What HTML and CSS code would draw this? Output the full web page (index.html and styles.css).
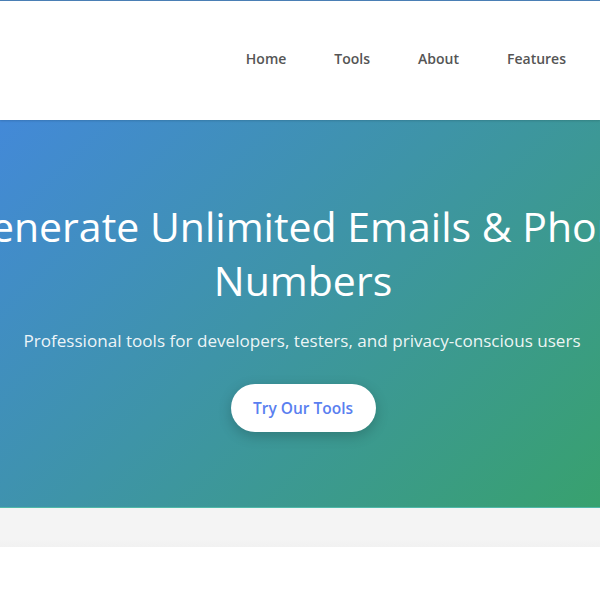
FILE: index.html
```html
<!DOCTYPE html>
<html lang="en">
<head>
<meta charset="utf-8">
<title>Generator Tools</title>
<link rel="stylesheet" href="styles.css">
</head>
<body>
<div class="page">
  <header class="site-header">
    <nav class="nav">
      <a href="#" class="nav-link">Home</a>
      <a href="#" class="nav-link">Tools</a>
      <a href="#" class="nav-link">About</a>
      <a href="#" class="nav-link">Features</a>
    </nav>
  </header>
  <section class="hero">
    <h1 class="hero-title">Generate Unlimited Emails &amp; Phone Numbers</h1>
    <p class="hero-sub">Professional tools for developers, testers, and privacy-conscious users</p>
    <a href="#" class="hero-btn">Try Our Tools</a>
  </section>
  <section class="band"></section>
</div>
</body>
</html>
```
FILE: styles.css
```css
* { box-sizing: border-box; }
html, body { margin: 0; padding: 0; }
body {
  font-family: "Open Sans", "Noto Sans", sans-serif;
  background: #fff;
  overflow-x: hidden;
}
.page {
  border-top: 1px solid #4a7fb5;
  overflow: hidden;
}
.site-header {
  height: 119px;
  display: flex;
  align-items: center;
  justify-content: flex-end;
  padding-right: 34px;
  padding-bottom: 4px;
  background: #fff;
  box-shadow: 0 1px 2px rgba(0,0,0,0.15);
  position: relative;
  z-index: 1;
}
.nav {
  display: flex;
  gap: 48px;
}
.nav-link {
  color: #555;
  text-decoration: none;
  font-size: 14px;
  font-weight: 600;
}
.hero {
  height: 388px;
  background: linear-gradient(135deg, #4389d8 0%, #38a16e 100%);
  border-bottom: 1px solid #4fb8a8;
  display: flex;
  flex-direction: column;
  align-items: center;
  padding-top: 79px;
  color: #fff;
  text-align: center;
}
.hero-title {
  margin: 0 -100px;
  width: 800px;
  font-size: 41px;
  font-weight: 500;
  line-height: 54px;
  position: relative;
  left: 3px;
}
.hero-sub {
  margin: 22px 0 0;
  font-size: 17.1px;
  color: rgba(255,255,255,0.92);
  position: relative;
  left: 2px;
}
.hero-btn {
  margin-top: 32px;
  display: inline-flex;
  align-items: center;
  justify-content: center;
  width: 145px;
  height: 48px;
  border-radius: 24px;
  background: #fff;
  color: #5a7ff0;
  text-decoration: none;
  font-size: 15.5px;
  font-weight: 600;
  box-shadow: 0 4px 14px rgba(0,0,0,0.2);
  position: relative;
  left: 3px;
}
.band {
  height: 39px;
  background: linear-gradient(#f4f4f4 80%, #f1f1f1);
}
```
